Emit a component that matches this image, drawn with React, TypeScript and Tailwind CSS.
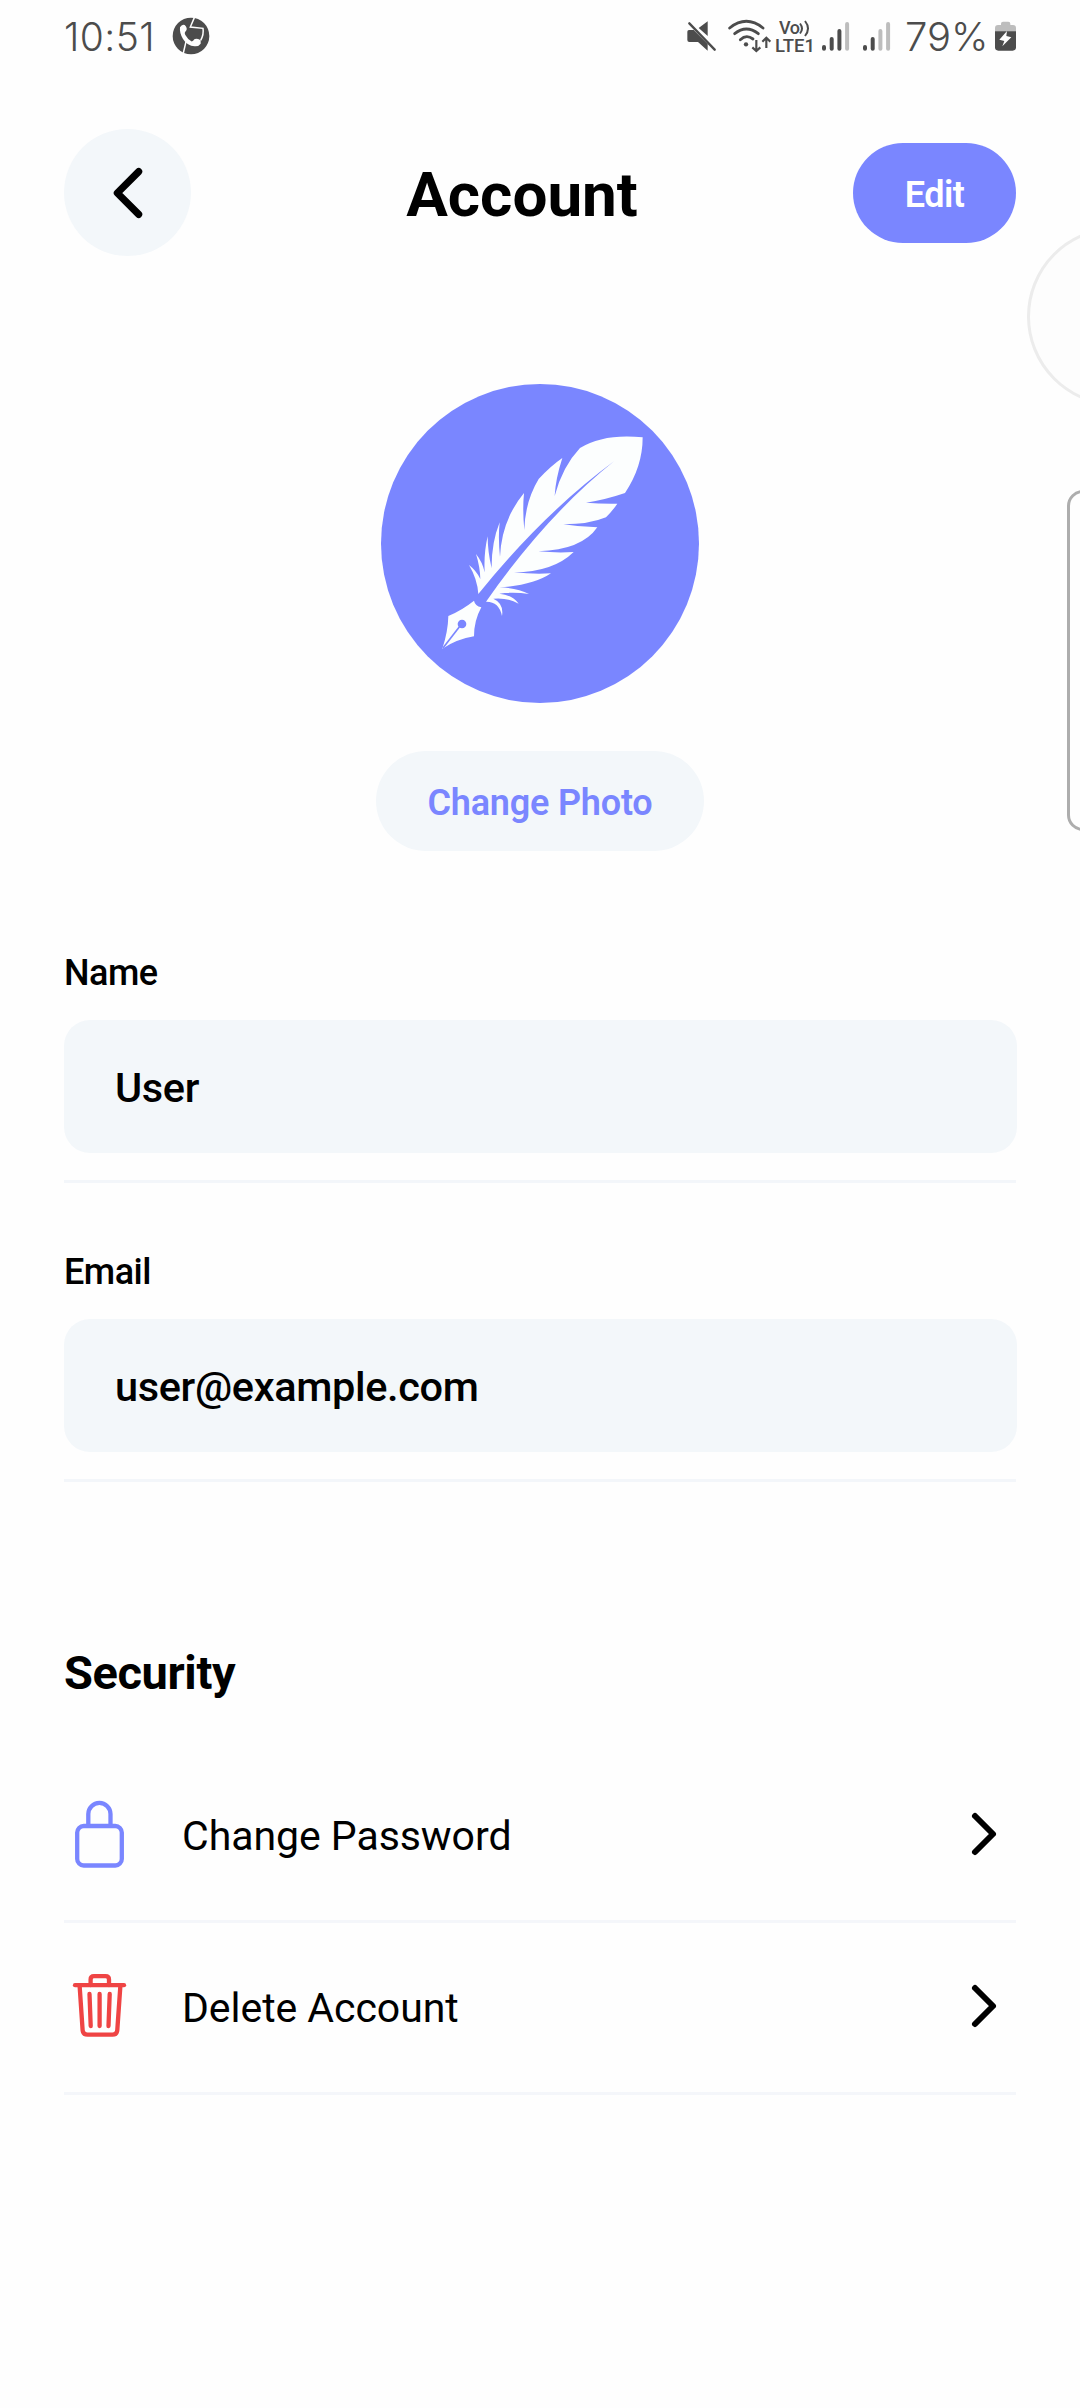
import React from "react";

const roboto = "font-['Roboto',sans-serif]";

function CallIcon() {
  return (
    <svg className="ml-[19px] h-[38px] w-[38px]" viewBox="0 0 114 114">
      <circle cx="57" cy="57" r="55" fill="#4c4c4c" />
      <path d="M67 2 L55 30 L93 34 Q96 52 86 70 M42 74 L34 108" fill="none" stroke="#fefefe" strokeWidth="4.5" />
      <path
        d="M24 31 Q30 20 38 24 Q48 34 42 42 Q36 46 40 54 Q48 68 58 73 Q63 74 67 67 Q73 63 86 70 L86 80 Q80 89 68 88 Q46 87 33 66 Q22 48 24 31Z"
        fill="#fefefe"
      />
    </svg>
  );
}

function MuteIcon() {
  return (
    <svg className="h-[32px] w-[30px]" viewBox="0 0 90 96">
      <path d="M4 35 Q4 30 9 30 L23 30 L65 72 L65 92 L36 66 L10 66 Q4 66 4 60Z" fill="#4c4c4c" />
      <path d="M65 4 L65 48 L38 24Z" fill="#4c4c4c" />
      <path d="M10 10 L86 89" stroke="#4c4c4c" strokeWidth="7" strokeLinecap="round" />
    </svg>
  );
}

function WifiIcon() {
  return (
    <svg className="ml-[11px] h-[36px] w-[44px]" viewBox="0 0 132 108">
      <g fill="none" stroke="#4c4c4c" strokeWidth="8.5" strokeLinecap="round">
        <path d="M8 30 Q58 -10 108 30" />
        <path d="M23 47 Q58 19 94 47" />
        <path d="M40 65 Q58 48 78 63" />
      </g>
      <circle cx="57" cy="79" r="6.5" fill="#4c4c4c" />
      <g fill="none" stroke="#4c4c4c" strokeWidth="6.5">
        <path d="M88 66 L88 98 M76 88 L88 99 L100 88" />
        <path d="M118 90 L118 60 M106 71 L118 59 L130 71" />
      </g>
    </svg>
  );
}

function Signal({ filled }: { filled: number }) {
  const tops = [24, 16, 8, 1];
  return (
    <svg className="h-[30px] w-[28px]" viewBox="0 0 28 30">
      {tops.map((top, i) => (
        <rect
          key={top}
          x={i * 7.7}
          y={top}
          width="4"
          height={29.7 - top}
          rx="2"
          fill={i < filled ? "#4c4c4c" : "#bdbdbd"}
        />
      ))}
    </svg>
  );
}

function Battery() {
  return (
    <svg className="ml-[8px] h-[30px] w-[21px]" viewBox="0 0 63 90">
      <path d="M18 8 Q18 2 24 2 L40 2 Q46 2 46 8 L46 12 L54 12 Q63 12 63 21 L63 32 L0 32 L0 21 Q0 12 9 12 L18 12Z" fill="#bdbdbd" />
      <path d="M0 31 L63 31 L63 79 Q63 89 53 89 L10 89 Q0 89 0 79Z" fill="#4c4c4c" />
      <path d="M36 30 L13 56 L28 60 L22 76 L49 49 L34 45Z" fill="#fefefe" />
    </svg>
  );
}

function StatusBar() {
  return (
    <div className="flex h-[72px] items-center pr-[64px] pl-[64px] font-['Inter',sans-serif] text-[#4c4c4c]">
      <span className="w-[89px] pt-px text-[39px] leading-[72px] font-[350] tracking-[0.4px] whitespace-nowrap">10:51</span>
      <CallIcon />
      <div className="ml-auto flex items-center">
        <MuteIcon />
        <WifiIcon />
        <div className="ml-[4px] flex w-[39px] flex-col pt-[2px] font-['Roboto',sans-serif] font-medium">
          <div className="flex h-[18px] items-center pl-[4px]">
            <span className="text-[18px] leading-[18px] tracking-[-0.5px]">Vo</span>
            <svg className="h-[17px] w-[11px]" viewBox="0 0 11 17" fill="none" stroke="#4c4c4c" strokeWidth="2">
              <path d="M1 3.5 Q5 8.5 1 13.5 M6 1 Q12 8.5 6 16" />
            </svg>
          </div>
          <span className="text-[18.5px] leading-[18px] whitespace-nowrap">LTE1</span>
        </div>
        <div className="ml-[8px] flex gap-[13px]">
          <Signal filled={3} />
          <Signal filled={2} />
        </div>
        <span className="ml-[14px] w-[82px] pt-px text-[40px] leading-[72px] font-[350] tracking-[0px] whitespace-nowrap">79%</span>
        <Battery />
      </div>
    </div>
  );
}

function Feather() {
  return (
    <svg className="h-[319px] w-[318px]" viewBox="33 42 954 957">
      <ellipse cx="510" cy="520.5" rx="477" ry="478.5" fill="#7a86ff" />
      <path
        fill="#fcfefe"
        d="M818 202 Q702 190 630 234 Q577 290 554 378 Q557 325 577 264 Q542 288 506 327 Q465 395 463 480 Q457 420 462 369 Q395 450 390 560 Q384 505 389 457 Q364 520 365 595 Q353 545 353 499 Q341 550 344 607 Q338 577 318 552 Q330 590 331 627 Q319 602 297 585 Q322 627 325 672 Q520 430 732 274 Q530 435 348 695 Q387 694 396 738 Q402 700 370 686 Q412 682 446 701 Q426 674 388 671 Q432 665 477 672 Q442 653 388 652 Q490 646 543 610 Q490 613 432 607 Q550 606 611 546 Q560 549 505 544 Q635 540 682 472 Q630 471 580 463 Q658 463 708 442 Q727 423 742 401 Q695 402 648 398 Q707 389 765 369 Q818 290 818 202Z"
      />
      <path fill="#fcfefe" d="M312 692 Q277 720 235 738 Q234 785 217 836 Q262 807 312 799 Q312 752 334 712 Q315 708 312 692Z" />
      <circle cx="276" cy="762" r="13" fill="#7a86ff" />
      <path d="M219 834 L270 768" stroke="#7a86ff" strokeWidth="5" />
    </svg>
  );
}

function ChevronRight() {
  return (
    <svg
      className="mb-[3px] ml-auto h-[64px] w-[64px]"
      viewBox="0 0 512 512"
      fill="none"
      stroke="#000"
      strokeWidth="48"
      strokeLinecap="round"
      strokeLinejoin="round"
    >
      <path d="M184 112l144 144-144 144" />
    </svg>
  );
}

function LockIcon() {
  return (
    <svg
      className="mb-[6px] h-[72px] w-[64px] overflow-visible"
      viewBox="0 0 64 72"
      fill="none"
      stroke="#7a86ff"
      strokeWidth="4.3"
    >
      <path d="M13.3 29.5 V17 a11.1 11.1 0 0 1 22.2 0 V29.5" />
      <rect x="2.2" y="29" width="44.6" height="39.5" rx="6.5" />
    </svg>
  );
}

function TrashIcon() {
  return (
    <svg
      className="mb-[3px] h-[72px] w-[64px] overflow-visible"
      viewBox="0 0 64 72"
      fill="none"
      stroke="#ef4444"
      strokeWidth="4.3"
      strokeLinecap="round"
      strokeLinejoin="round"
    >
      <path d="M4.6 15.5 L7.6 60 Q8 64.7 12.6 64.7 H37.5 Q41.9 64.7 42.3 60 L45.4 15.5" />
      <path d="M0 15.2 H49" />
      <path d="M15.6 15 V9.6 Q15.6 6.2 19 6.2 H30.5 Q34 6.2 34 9.6 V15" />
      <path d="M24.6 24 V56 M14.5 24 L15.7 56 M34.7 24 L33.5 56" />
    </svg>
  );
}

function Field({ label, value, className }: { label: string; value: string; className: string }) {
  return (
    <div className={`flex flex-col border-b-[3px] border-[#f3f6fa] ${className}`}>
      <label className="h-[44px] text-[36px] leading-[46px] font-medium tracking-[-0.5px]">{label}</label>
      <div className="mt-[26px] -mr-px flex h-[133px] items-center rounded-[26px] bg-[#f3f7fa] pt-[3px] pl-[51px] text-[41.5px] font-medium tracking-[-0.35px]">
        {value}
      </div>
    </div>
  );
}

function Row({ icon, label }: { icon: React.ReactNode; label: string }) {
  return (
    <div className="flex h-[172px] items-center border-b-[3px] border-[#f4f6fa]">
      <div className="flex w-[118px] pl-[11px]">{icon}</div>
      <span className="pt-px text-[41px] leading-[50px] tracking-[-0.05px]">{label}</span>
      <ChevronRight />
    </div>
  );
}

export default function App() {
  return (
    <div className={`relative flex h-[2408px] w-[1080px] flex-col overflow-hidden bg-[#fefefe] text-black ${roboto}`}>
      <StatusBar />

      <header className="mt-[57px] flex h-[127px] items-center justify-between px-[64px]">
        <button className="flex h-[127px] w-[127px] items-center justify-center rounded-full bg-[#f3f7fa]">
          <svg
            className="h-[76px] w-[76px]"
            viewBox="0 0 512 512"
            fill="none"
            stroke="#000"
            strokeWidth="48"
            strokeLinecap="round"
            strokeLinejoin="round"
          >
            <path d="M328 112L184 256l144 144" />
          </svg>
        </button>
        <h1 className="pt-[5px] text-[62px] leading-[72px] font-bold">Account</h1>
        <button className="flex h-[100px] w-[163px] items-center justify-center rounded-full bg-[#7a86ff] pt-[4px] text-[36px] font-semibold tracking-[-0.5px] text-white">
          Edit
        </button>
      </header>

      <section className="mt-[128px] flex flex-col items-center">
        <Feather />
        <button className="mt-[48px] flex h-[100px] w-[328px] items-center justify-center rounded-full bg-[#f3f7fa] pt-[3px] text-[36px] font-semibold tracking-[-0.2px] text-[#7a86ff]">
          Change Photo
        </button>
      </section>

      <main className="flex flex-col px-[64px]">
        <Field label="Name" value="User" className="mt-[99px] h-[233px]" />
        <Field label="Email" value="user@example.com" className="mt-[66px] h-[233px]" />

        <h2 className="mt-[162px] h-[60px] text-[47px] leading-[58px] font-bold tracking-[-0.4px]">Security</h2>
        <div className="mt-[47px] flex flex-col">
          <Row icon={<LockIcon />} label="Change Password" />
          <Row icon={<TrashIcon />} label="Delete Account" />
        </div>
      </main>

      {/* system overlays peeking in from the right edge */}
      <div className="absolute top-[227px] left-[1027px] h-[179px] w-[179px] rounded-full border-[3px] border-[#ececec] bg-[#fdfdfd]" />
      <div className="absolute top-[490px] left-[1067px] h-[341px] w-[60px] rounded-[16px] border-[3px] border-[#adadad] bg-[#fefefe]" />
    </div>
  );
}
